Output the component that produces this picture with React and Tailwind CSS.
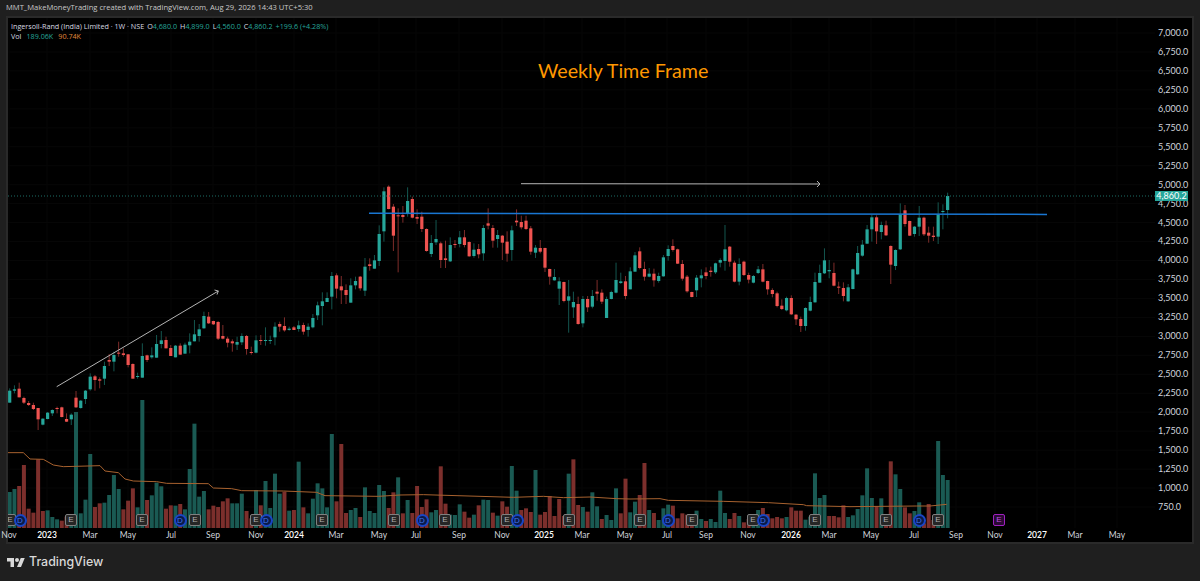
import { Fragment } from 'react'

// weekly candles, pixel rows read off the chart: [green?, bodyTop, bodyBottom, high, low]
// every group is relative to its own row origin at 1/3 px
const seg1 = [
  [1,332,368,325,368],[1,328,332,316,340],[0,326,352,308,352],[0,354,368,350,372],[0,369,375,363,378],[0,375,387,368,390],[0,384,418,384,450],[1,416,434,415,436],[1,398,417,396,418],[1,390,400,388,408],
  [0,384,386,380,400],[0,382,411,380,412],[0,417,425,400,426],[1,404,418,400,435],[0,353,382,333,384],[1,362,384,360,386],[1,332,357,330,372],[1,290,328,280,332],[0,289,300,285,332],[0,298,302,292,325],
  [1,258,296,245,315],[0,240,245,222,258],[1,225,245,215,274],[0,218,220,185,230],[0,220,225,205,230],[0,223,255,222,262],[0,252,296,250,296],[1,288,290,278,296],[1,228,293,190,293],[0,226,240,224,246],
  [1,226,232,202,236],[1,192,233,165,233],[1,181,192,153,205],[0,180,205,170,205],[0,204,228,195,228],[1,197,232,195,232],[0,197,224,190,224],[1,194,221,188,221],[1,185,196,160,220],[1,163,184,120,184],
  [1,148,168,132,185],[1,108,145,95,146],[0,110,130,96,132],[0,123,133,122,135],[0,126,176,123,180],[0,168,176,135,178],[0,176,188,170,202],[0,184,190,178,215],[1,186,194,170,210],[1,168,187,160,195],
  [0,168,207,165,224],[0,216,219,200,224],[1,181,218,166,220],[0,180,183,165,195],[1,180,183,142,197],[1,180,183,167,192],[1,140,172,127,196],[0,132,140,125,155],[0,138,151,112,155],[1,146,150,140,152],
  [0,142,150,138,150],[1,136,147,122,155],
]
const seg2 = [
  [0,465,485,458,494],[1,470,480,460,500],[1,444,472,432,475],[1,406,436,395,450],[1,394,408,367,466],[1,384,396,367,396],[1,318,380,306,418],[0,316,356,310,385],[0,349,361,318,402],[0,360,375,343,402],
  [1,346,398,325,398],[1,333,346,320,358],[0,320,355,318,362],[1,290,362,264,378],[0,283,288,265,302],[1,271,296,255,296],[1,192,273,166,288],[1,64,184,52,215],[0,50,117,46,118],[0,110,197,102,243],
  [0,136,139,115,307],[0,135,141,108,158],[1,93,130,52,140],[0,87,143,80,145],[0,141,146,118,162],[0,140,177,125,186],[0,177,243,175,245],[1,219,252,195,261],[1,207,217,150,225],[0,220,270,215,294],
  [0,265,270,212,294],[1,225,274,202,276],[0,222,225,210,234],[1,202,222,183,232],[0,202,225,180,232],[0,216,259,214,260],[1,239,258,220,263],[0,237,253,222,265],[1,174,250,165,272],[0,160,167,115,178],
  [0,174,212,165,233],[1,195,207,180,233],[0,197,218,195,270],[0,215,251,184,275],[1,181,240,167,272],[0,152,157,118,168],[0,156,172,137,178],[0,152,177,137,180],[0,175,245,168,254],[1,233,248,225,264],
  [0,234,245,210,250],[0,234,293,233,306],[0,297,320,296,344],[1,321,331,297,332],[1,334,356,322,405],[0,336,393,335,397],[1,379,392,330,488],[1,396,412,365,444],[0,402,462,380,464],[1,387,460,378,472],
  [0,387,412,378,426],[1,378,410,360,415],[0,365,371,330,392],
  [0,368,395,358,402],[1,387,444,380,444],[1,366,387,362,388],[1,330,368,278,370],[1,334,339,308,342],[0,334,378,318,388],[1,304,358,292,358],[1,256,305,246,305],[0,244,294,232,298],[0,297,320,275,332],
  [1,311,320,294,322],[0,311,331,296,350],[1,318,333,308,338],[1,262,319,255,320],[1,237,258,226,272],[0,228,240,208,245],[0,238,281,236,282],[0,282,326,270,332],[0,320,364,315,368],[0,366,381,365,382],
  [1,323,361,315,381],[1,316,325,298,352],[0,307,318,292,328],[0,302,306,290,320],[1,280,307,278,312],[1,270,278,265,292],[1,238,273,165,302],[0,230,275,228,290],[0,278,335,272,337],[1,282,335,265,346],
  [0,275,315,272,318],[0,315,329,308,340],[1,318,338,315,340],[1,298,309,288,312],[0,298,335,282,337],[0,333,358,332,374],[0,360,372,355,382],[0,370,408,365,412],[0,407,417,388,420],[1,384,421,380,424],
  [0,384,433,376,435],[0,434,448,432,465],[0,447,468,440,486],[1,414,468,412,482],[1,396,422,380,424],[1,336,397,308,398],[1,309,338,284,338],[1,271,310,235,312],[1,300,304,270,325],[0,309,347,278,349],
  [0,350,353,335,372],[0,354,378,337,394],[1,352,394,342,395],[1,298,357,296,358],[1,249,313,228,314],[1,224,257,210,260],[1,178,221,165,222],[1,142,178,135,215],[0,142,184,136,222],[1,165,186,155,208],
  [0,166,196,152,198],[0,228,284,226,342],[1,240,288,238,300],[1,133,238,100,240],[0,121,162,105,170],[0,153,197,152,198],[1,170,192,168,200],[1,143,170,108,198],[0,143,193,140,198],[0,188,197,170,218],
  [0,197,201,170,213],[1,133,200,97,222],[1,123,125,103,178],[1,78,120,68,145],
]
const candles = [
  ...seg1.map((c) => [c[0], 280 + c[1] / 3, 280 + c[2] / 3, 280 + c[3] / 3, 280 + c[4] / 3]),
  ...seg2.map((c) => [c[0], 170 + c[1] / 3, 170 + c[2] / 3, 170 + c[3] / 3, 170 + c[4] / 3]),
]

// volume bar tops, first bar is the clipped one left of the first candle
const vol1 = 'r282 g276 g267 r258 r195 r326 r338 r178 r333 g331 g351 g358 r362 r350 g350 g36 g340 g299 g162 r321 r310 g308 g285 g225 g267 r328 r302 r265 g322 g0 r300 g286 g248 g259 r326 r316 g317 r312 g328 g207 g71 g290 g273 r328 r317 r321 r304 r295 g310 g310 g281 r333 r355 g270 r316 g243 g324 g221 g281 r275 g332 r330 g185'
const vol2 = 'r262 g280 g236 g190 g205 g262 g42 r244 r72 r279 g270 g264 r291 g202 g273 g279 g195 g213 r264 r217 g172 r280 g240 r279 r198 r261 r238 g277 g270 r139 r251 g284 g285 g253 r275 r293 g284 r256 g239 g240 r278 g287 r244 r260 g138 g212 r270 r265 r276 g150 r284 r276 r228 r288 r237 r288 g161 r118 r255 g261 r275 g217 g259 r297 g285 g300 g205 r280 r176 g277 g245 r225 r129 g270 r279 g300 g265 g254 r257 r295 r280 r284 r300 g272 g297 r303 g297 g306 g212 g279 r297 r279 g288 r307 r297 g285 g270 r264 r282 r295 r291 r295 g291 r262 r272 r272 g299 g290 g160 g234 g225 r288 r288 r292 r256 g291 g286 g267 g226 g145 g234 r258 g235 r290 r124 g163 g207 r262 r280 g273 g247 r310 r252 r300 g63 g165 g180'
const volumes = [
  ...vol1.split(' ').map((v) => [v[0], 400 + Number(v.slice(1)) / 3]),
  ...vol2.split(' ').map((v) => [v[0], 420 + Number(v.slice(1)) / 3]),
]

const ma = [
  [0,158],[70,158],[90,177],[130,178],[160,195],[190,200],[300,197],[315,213],[355,218],[375,237],[400,243],[470,245],[500,250],[625,251],[640,264],[695,266],[725,272],[850,273],
].map(([x, y]) => [x / 3, 400 + y / 3]).concat(
  [[50,217],[75,227],[235,229],[300,225],[370,224],[640,232],[730,229],[790,233],[870,231],[950,236],[990,237]].map(([x, y]) => [300 + x / 3, 420 + y / 3]),
  [[90,236],[115,241],[280,244],[415,248],[520,254],[530,257],[660,260],[860,258],[900,258],[950,253]].map(([x, y]) => [630 + x / 3, 420 + y / 3]),
)

const barX = (i) => 9.7 + i * 4.737

const prices = ['7,000.0','6,750.0','6,500.0','6,250.0','6,000.0','5,750.0','5,500.0','5,250.0','5,000.0','4,750.0','4,500.0','4,250.0','4,000.0','3,750.0','3,500.0','3,250.0','3,000.0','2,750.0','2,500.0','2,250.0','2,000.0','1,750.0','1,500.0','1,250.0','1,000.0','750.0']

const ticks = [
  ['Nov',9],['2023',47,1],['Mar',90],['May',128],['Jul',171],['Sep',213],['Nov',256],['2024',294,1],['Mar',336],['May',379],['Jul',416],['Sep',459],['Nov',502],['2025',544,1],
  ['Mar',582],['May',625],['Jul',667],['Sep',706],['Nov',748],['2026',791,1],['Mar',829],['May',871],['Jul',914],['Sep',956],['Nov',995],['2027',1037,1],['Mar',1075],['May',1117],
]

const badges = [
  ['E',10],['D',20],['E',71],['E',142],['D',180],['E',195],['E',256],['D',266],['E',322],['E',394],['D',422],['E',445],['E',507],['D',517],['E',569],
  ['E',640],['D',668],['E',692],['E',753],['D',763],['E',815],['E',886],['D',919],['E',938],
]

// the pane starts at 8,18 on the page
const originX = 8
const originY = 18

function Chart() {
  return (
    <svg width="1147" height="510" viewBox={`${originX} ${originY} 1147 510`} className="block">
      {ticks.map((t) => (
        <line key={t[0] + t[1]} x1={t[1]} x2={t[1]} y1={originY} y2={528} stroke="#070707" />
      ))}
      {prices.map((p, i) => (
        <line key={p} x1={originX} x2={1155} y1={33 + i * 18.96} y2={33 + i * 18.96} stroke="#070707" />
      ))}

      {volumes.map(([c, top], i) => (
        <rect key={i} x={barX(i - 1) - 2} y={top} width="4" height={528 - top} fill={c === 'g' ? '#1a5a53' : '#7c2f2c'} />
      ))}
      <polyline points={ma.map((p) => p.join(',')).join(' ')} fill="none" stroke="#a8622f" strokeWidth="1" />

      {candles.map((c, i) => (
        <Fragment key={i}>
          <rect x={barX(i) - 0.5} y={c[3]} width="1" height={c[4] - c[3]} fill={c[0] ? '#14564f' : '#7e2c2a'} />
          <rect x={barX(i) - 1.6} y={c[1]} width="3.2" height={Math.max(c[2] - c[1], 1)} fill={c[0] ? '#26a69a' : '#ef5350'} />
        </Fragment>
      ))}

      <line x1={originX} x2={1155} y1="196" y2="196" stroke="#1c6e66" strokeWidth="1" strokeDasharray="1 2" />
      <line x1="369" y1="213.2" x2="1047" y2="214.4" stroke="#1976d2" strokeWidth="1.5" />

      <line x1="56.7" y1="386.7" x2="218.3" y2="291" stroke="#b4b4b4" strokeWidth="1" />
      <polyline points="214.5,290 218.3,291 217,294.6" fill="none" stroke="#b4b4b4" strokeWidth="1" />
      <line x1="521" y1="183.7" x2="820" y2="184" stroke="#b4b4b4" strokeWidth="1" />
      <polyline points="817,181 820,184 817,187" fill="none" stroke="#b4b4b4" strokeWidth="1" />
    </svg>
  )
}

function Badge({ type, x }) {
  if (type === 'D') {
    return (
      <span
        style={{ left: x - originX - 6.5 }}
        className="absolute top-[496px] w-[13px] h-[13px] rounded-full border-2 border-[#1a46c4] bg-[#0a1a4a] text-[#3f74ea] text-[8px] leading-[9px] text-center font-['Liberation_Sans',sans-serif]"
      >
        D
      </span>
    )
  }
  return (
    <span
      style={{ left: x - originX - 6 }}
      className="absolute top-[496px] w-[12px] h-[12px] rounded-[2px] border border-[#808080] bg-[#262626] text-[#b0b0b0] text-[8px] leading-[10px] text-center font-['Liberation_Sans',sans-serif]"
    >
      E
    </span>
  )
}

export default function App() {
  return (
    <div className="w-[1200px] h-[581px] bg-[#1f1f1f] flex flex-col overflow-hidden font-['Lato',sans-serif]">
      <div className="h-4 px-[6px] flex items-center text-[7.6px] leading-none text-[#c8c8c8] whitespace-nowrap font-['Open_Sans',sans-serif]">
        MMT_MakeMoneyTrading created with TradingView.com, Aug 29, 2026 14:43 UTC+5:30
      </div>

      <div className="mx-[6px] h-[528px] border-2 border-[#2a2a2a] bg-black flex flex-col">
        <div className="flex flex-1 min-h-0">
          <div className="relative w-[1147px] overflow-hidden">
            <Chart />

            <div className="absolute left-[3px] top-[3px] text-[7.2px] leading-[10px] whitespace-nowrap text-[#d8dae0] font-['Open_Sans',sans-serif]">
              <div className="flex gap-[3px]">
                <span>Ingersoll-Rand (India) Limited · 1W · NSE</span>
                <span>O<span className="text-[#26a69a]">4,680.0</span></span>
                <span>H<span className="text-[#26a69a]">4,899.0</span></span>
                <span>L<span className="text-[#26a69a]">4,560.0</span></span>
                <span>C<span className="text-[#26a69a]">4,860.2</span></span>
                <span className="text-[#26a69a]">+199.6 (+4.28%)</span>
              </div>
              <div className="flex gap-[5px]">
                <span>Vol</span>
                <span className="text-[#26a69a]">189.06K</span>
                <span className="text-[#e08a3c]">90.74K</span>
              </div>
            </div>

            <div className="absolute left-[530px] top-[39px] text-[19.7px] leading-7 text-[#ff9800] whitespace-nowrap">
              Weekly Time Frame
            </div>

            {badges.map((b, i) => (
              <Badge key={i} type={b[0]} x={b[1]} />
            ))}
            <span className="absolute left-[985px] top-[496px] w-[12px] h-[12px] rounded-[2px] border border-[#a020c0] bg-[#2a0a33] text-[#c050e0] text-[8px] leading-[10px] text-center font-['Liberation_Sans',sans-serif]">
              E
            </span>
          </div>

          <div className="relative flex-1 pt-[6px] text-[9px] text-[#d1d4dc]">
            {prices.map((p) => (
              <div key={p} className="h-[18.96px] leading-[18.96px] pl-[3px]">
                {p}
              </div>
            ))}
            <span className="absolute left-0 top-[173px] w-[33px] h-[10px] bg-[#26a69a] text-white text-[9px] leading-[10px] text-center">
              4,860.2
            </span>
          </div>
        </div>

        <div className="relative h-[14px] text-[8.5px] leading-[15px] text-[#d1d4dc]">
          {ticks.map((t) => (
            <span
              key={t[0] + t[1]}
              style={{ left: t[1] - 8 }}
              className={`absolute -translate-x-1/2 ${t[2] ? 'font-semibold text-white' : ''}`}
            >
              {t[0]}
            </span>
          ))}
        </div>
      </div>

      <div className="flex-1 flex items-center gap-[4px] pl-[7px]">
        <svg width="18" height="14" viewBox="0 0 36 28" fill="#d9d9d9">
          <path d="M14 22H7V11H0V4h14v18zM28 22h-8l7.5-18h8L28 22z" />
          <circle cx="20" cy="8" r="4" />
        </svg>
        <span className="text-[12.4px] font-medium text-[#d9d9d9] font-['Inter',sans-serif]">TradingView</span>
      </div>
    </div>
  )
}
